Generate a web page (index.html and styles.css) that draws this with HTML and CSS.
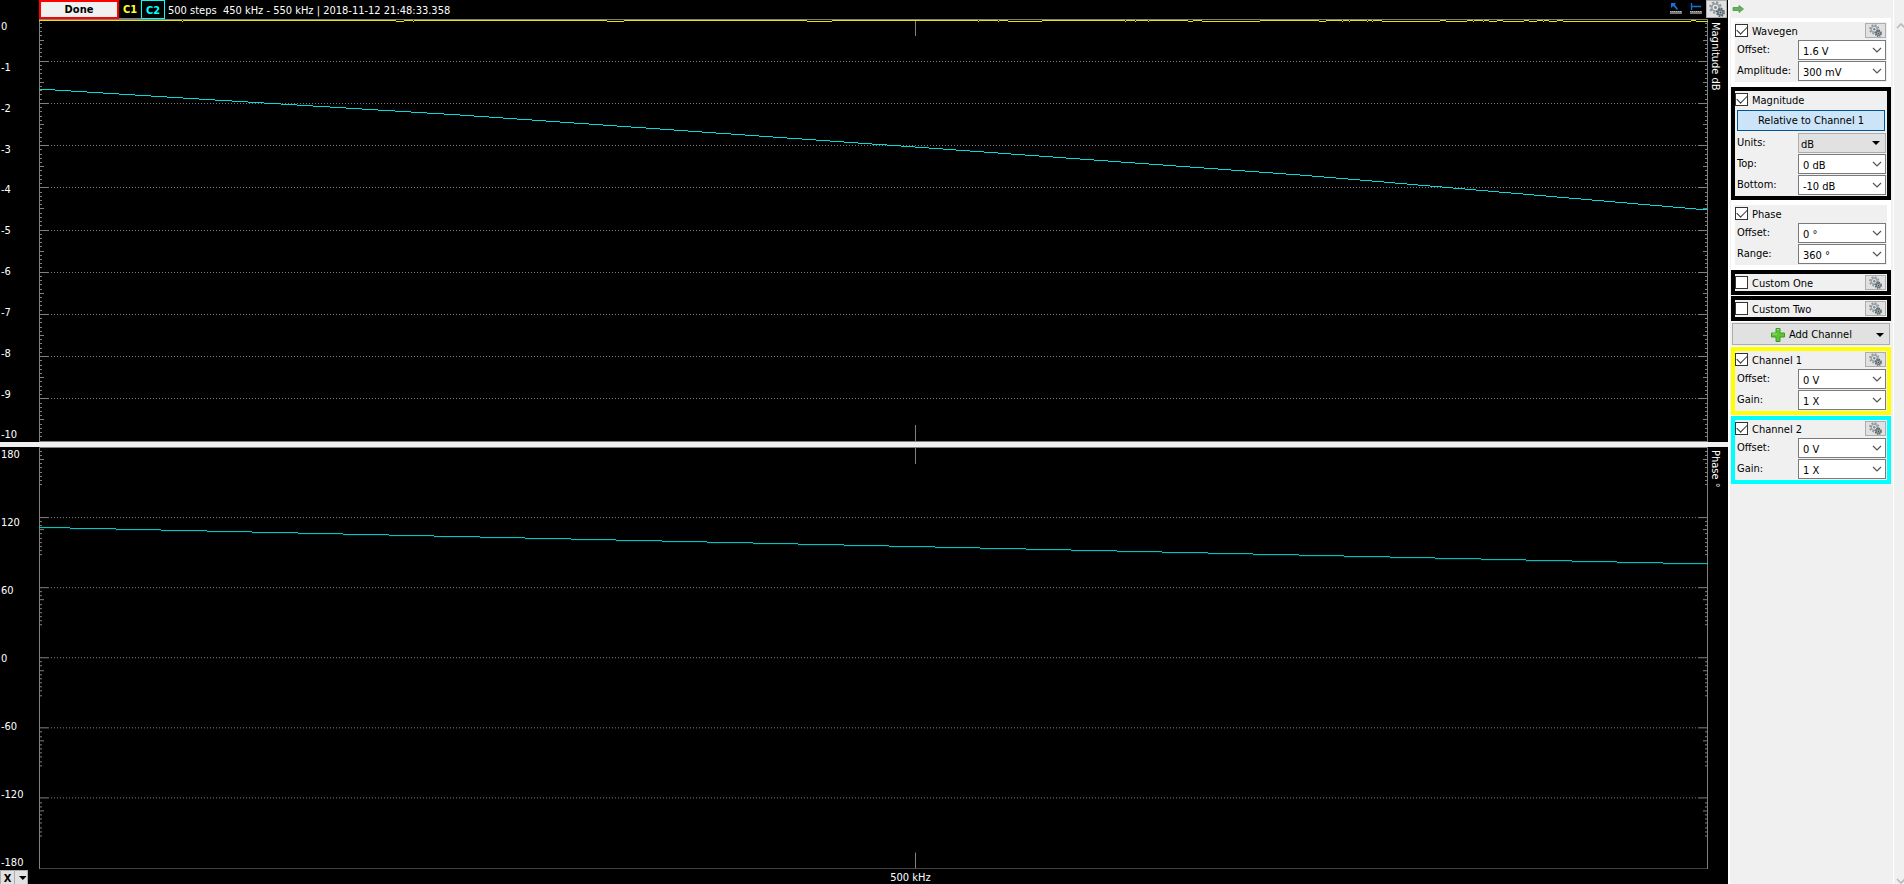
FILE: index.html
```html
<!DOCTYPE html>
<html lang="en">
<head>
<meta charset="utf-8">
<title>Network Analyzer</title>
<link rel="stylesheet" href="styles.css">
</head>
<body>
<svg class="defs" aria-hidden="true">
  <symbol id="gear" viewBox="0 0 16 16">
    <circle cx="6.500" cy="6.500" r="5.200" fill="none" stroke="#8b959b" stroke-width="2.200" stroke-dasharray="2.200 1.880"/>
    <circle cx="6.500" cy="6.500" r="3.700" fill="#e6eaec" stroke="#98a2a8" stroke-width="1.800"/>
    <circle cx="6.500" cy="6.500" r="1.500" fill="#7b868c"/>
    <circle cx="11.500" cy="11.500" r="3.500" fill="none" stroke="#59646b" stroke-width="2" stroke-dasharray="1.600 1.150"/>
    <circle cx="11.500" cy="11.500" r="2.500" fill="#c3cacd" stroke="#69747b" stroke-width="1.500"/>
    <circle cx="11.500" cy="11.500" r="1" fill="#3c464c"/>
  </symbol>
  <symbol id="chevron" viewBox="0 0 10 6"><path d="M1 1l4 4 4-4" fill="none" stroke="#555" stroke-width="1.2"/></symbol>
  <symbol id="triangle" viewBox="0 0 8 4"><path d="M0 0h8l-4 4z" fill="#000"/></symbol>
</svg>

<main class="scope">
  <header class="toolbar">
    <button class="done" type="button">Done</button>
    <button class="channel channel-one" type="button">C1</button>
    <button class="channel channel-two" type="button">C2</button>
    <p class="status">500 steps&nbsp; 450 kHz - 550 kHz | 2018-11-12 21:48:33.358</p>
    <div class="tools">
      <button class="tool" type="button" aria-label="Cursor">
        <svg width="12" height="12" viewBox="0 0 12 12"><path d="M1 0h5L4.800 1.500 8 6l-1 1L3.200 3 1 5z" fill="#1673d6"/><path d="M0 8h12v3H0z" fill="#777"/><path d="M0 8.500h12" stroke="#bbb" stroke-dasharray="1 1"/></svg>
      </button>
      <button class="tool" type="button" aria-label="Rulers">
        <svg width="12" height="12" viewBox="0 0 12 12"><path d="M1.500 0v7M1 3.500h10" fill="none" stroke="#1673d6" stroke-width="1.400"/><path d="M0 8h12v3H0z" fill="#777"/><path d="M0 8.500h12" stroke="#bbb" stroke-dasharray="1 1"/></svg>
      </button>
      <button class="gear gear-large" type="button" aria-label="Plot settings"><svg width="16" height="16"><use href="#gear"/></svg></button>
    </div>
  </header>

  <section class="chart">
    <div class="axis"><span>0</span><span>-1</span><span>-2</span><span>-3</span><span>-4</span><span>-5</span><span>-6</span><span>-7</span><span>-8</span><span>-9</span><span>-10</span></div>
    <div class="plot"><svg id="magnitude" viewBox="0 0 1669 423" preserveAspectRatio="none"></svg></div>
    <div class="title">Magnitude dB</div>
  </section>
  <div class="splitter"></div>
  <section class="chart">
    <div class="axis"><span>180</span><span>120</span><span>60</span><span>0</span><span>-60</span><span>-120</span><span>-180</span></div>
    <div class="plot"><svg id="phase" viewBox="0 0 1669 422" preserveAspectRatio="none"></svg></div>
    <div class="title">Phase °</div>
  </section>

  <footer class="footer">
    <button class="x-axis" type="button"><b>X</b><svg width="8" height="4"><use href="#triangle"/></svg></button>
    <div class="frequency">500 kHz</div>
  </footer>
</main>

<aside class="side">
  <div class="panel">
    <button class="next" type="button" aria-label="Collapse"><svg width="12" height="8" viewBox="0 0 12 8"><path d="M1 2.500h6V.5L11.500 4 7 7.500v-2H1z" fill="#62b35a" stroke="#4b9645" stroke-width=".8"/></svg></button>
    <div class="groups" id="groups"></div>
  </div>
  <div class="scroll">
    <svg width="8" height="6" viewBox="0 0 8 6"><path d="M1 5l4-4 4 4" fill="none" stroke="#b8b8b8" stroke-width="1.600"/></svg>
    <svg width="8" height="6" viewBox="0 0 8 6"><path d="M1 1l4 4 4-4" fill="none" stroke="#b8b8b8" stroke-width="1.600"/></svg>
  </div>
</aside>
<script src="app.js"></script>
</body>
</html>
```
FILE: styles.css
```css
* { box-sizing: border-box; }

body {
  margin: 0;
  height: 100vh;
  display: flex;
  overflow: hidden;
  background: #f0f0f0;
  color: #000;
  font: 11px/14px "DejaVu Sans Condensed", "DejaVu Sans", sans-serif;
}

button, select, input { font: inherit; color: inherit; margin: 0; padding: 0; border-radius: 0; }
svg { display: block; }
.defs { position: absolute; width: 0; height: 0; }

/* Plot area */
.scope {
  flex: 1;
  min-width: 0;
  display: grid;
  grid-template-rows: 19px minmax(0, 1fr) 5px minmax(0, 1fr) 15px;
  background: #000;
  color: #fff;
}

.toolbar { display: flex; align-items: flex-start; padding-left: 39px; }
.done { width: 80px; height: 19px; padding-top: 1px; border: 2px solid #f00; background: #f0f0f0; color: #000; font-weight: bold; }
.channel { height: 19px; padding-top: 2px; background: #000; font-weight: bold; }
.channel-one { width: 22px; border: 0; border-bottom: 1px solid #808080; color: #ff3; }
.channel-two { width: 24px; border: 1px solid #0ff; color: #0ff; }
.status { margin: 4px 0 0 3px; line-height: 13px; white-space: nowrap; }
.tools { display: flex; margin-left: auto; padding-right: 1px; }
.tool { width: 20px; height: 17px; border: 0; background: none; display: grid; place-items: center; }

.gear { width: 21px; height: 15px; border: 1px solid #adadad; background: #e1e1e1; display: grid; place-items: center; }
.gear-large { height: 18px; }

.chart { display: grid; grid-template-columns: 39px minmax(0, 1fr) 20px; min-height: 0; }
.axis { display: flex; flex-direction: column; justify-content: space-between; padding: 1px 0 0 1px; line-height: 13px; }
.plot { min-height: 0; }
.plot svg { width: 100%; height: 100%; shape-rendering: crispEdges; }
.plot path { fill: none; stroke-width: 1px; vector-effect: non-scaling-stroke; }
.frame { stroke: #808080; }
.grid { stroke: #808080; stroke-dasharray: 1 2; }
.trace-one { stroke: #e6e600; }
.trace-two { stroke: #00dcdc; }
.title { writing-mode: vertical-rl; padding-top: 3px; line-height: 14px; justify-self: start; }
.splitter { background: #f0f0f0; }

.footer { display: grid; grid-template-columns: 39px minmax(0, 1fr) 20px; }
.x-axis { width: 28px; height: 14px; margin-top: 1px; border: 1px solid #adadad; border-bottom: 0; background: #e1e1e1; color: #000; display: flex; align-items: center; gap: 4px; }
.x-axis b { width: 15px; padding-top: 2px; border-right: 1px solid #adadad; line-height: 12px; }
.frequency { padding: 3px 0 0 51%; line-height: 12px; }

/* Side panel */
.side { width: 176px; display: flex; border-left: 2px solid #fff; }
.panel { flex: 1; padding: 0 2px 0 1px; border-right: 1px solid #fff; }
.next { display: grid; place-items: center start; width: 20px; height: 18px; padding-left: 1px; border: 0; background: none; }
.groups { display: grid; gap: 1px; background: #fff; }
.group { margin: 0; border: 4px solid #fff; background: #f0f0f0; display: grid; gap: 1px; padding-bottom: 1px; }
.group-black { border-color: #000; }
.group-yellow { border-color: #ff0; }
.group-cyan { border-color: #0ff; }
.group-single { padding-bottom: 0; }

.group-head { display: flex; align-items: center; height: 17px; padding-right: 1px; }
.group-head label { flex: 1; display: flex; align-items: center; gap: 4px; line-height: 15px; }
.group-head label span { padding-top: 1px; }
.group-head input { appearance: none; width: 13px; height: 13px; border: 1px solid #333; background: #fff; display: grid; place-items: center; }
.group-head input:checked::before { content: ""; width: 9px; height: 5px; margin-top: -3px; border: solid #333; border-width: 0 0 1px 1px; transform: rotate(-45deg); }

.relative { height: 21px; margin: 1px 2px; padding-top: 1px; border: 1px solid #005499; background: #cce4f7; }
.field { display: grid; grid-template-columns: minmax(0, 1fr) 88px; align-items: center; padding: 0 1px 0 2px; }
.combo { display: grid; grid-template-columns: minmax(0, 1fr) 14px; align-items: center; }
.combo select { grid-area: 1 / 1 / 2 / 3; appearance: none; height: 20px; padding: 3px 0 0 4px; border: 1px solid #7a7a7a; background: #fff; }
.combo svg { grid-area: 1 / 2; pointer-events: none; z-index: 1; }
.combo-flat select { border-color: #adadad; background: #e1e1e1; padding-left: 2px; }

.add { display: flex; align-items: center; height: 22px; margin: 0 1px; padding: 1px 5px 0 38px; border: 1px solid #adadad; background: #e1e1e1; gap: 4px; }
.add-row { padding: 1px 0; background: #f0f0f0; }
.add-row .add { width: calc(100% - 2px); }
.add-label { flex: 1; padding-top: 1px; text-align: left; }

.scroll { width: 10px; padding: 23px 0 0 2px; display: flex; flex-direction: column; justify-content: space-between; overflow: hidden; }
```
FILE: app.js
```js
const SVG = "http://www.w3.org/2000/svg";
const WIDTH = 1669;

function addPath(svg, className, d) {
  const path = document.createElementNS(SVG, "path");
  path.setAttribute("class", className);
  path.setAttribute("d", d);
  svg.append(path);
}

function drawFrame(svg, height, divisions, minorTicks, middleTick) {
  const step = (height - 1) / divisions;
  const subStep = minorTicks.spacing;
  let ticks = `M.5 .5H${WIDTH - 0.5}V${height - 0.5}H.5Z`;
  let grid = "";
  const tick = (y, length) => {
    ticks += `M1 ${y}h${length}M${WIDTH - 1} ${y}h${-length}`;
  };
  for (let i = 0; i < divisions; i++) {
    const y = Math.floor(i * step) + 0.5;
    if (i > 0) {
      tick(y, 9);
      grid += `M12 ${y}H${WIDTH - 10}`;
    }
    for (let k = 1; k <= 9; k++) {
      const minor = Math.floor(i * step + k * subStep) + 0.5;
      tick(minor, k === middleTick ? 4 : 2);
    }
  }
  ticks += `M876.5 1v16M876.5 ${height - 1}v-16`;
  addPath(svg, "grid", grid);
  addPath(svg, "frame", ticks);
}

function drawTrace(svg, className, points) {
  let d = "";
  for (let i = 1; i < points.length; i++) {
    const [x0, y0] = points[i - 1];
    const [x1, y1] = points[i];
    const steps = y1 - y0;
    for (let k = 0; k < steps; k++) {
      const from = Math.round(x0 + (x1 - x0) * k / steps);
      const to = Math.round(x0 + (x1 - x0) * (k + 1) / steps);
      d += `M${from} ${y0 + k + 0.5}H${to}`;
    }
  }
  addPath(svg, className, d);
}

const magnitude = document.getElementById("magnitude");
drawFrame(magnitude, 423, 10, { spacing: 4.22 }, 5);

/* Spans in which channel 1 reads one step below 0 dB. */
const dips = [[143, 144], [357, 365], [374, 375], [568, 585], [768, 793], [939, 940], [959, 960],
  [969, 1003], [1086, 1087], [1096, 1097], [1109, 1110], [1149, 1154], [1163, 1221], [1280, 1287],
  [1303, 1304], [1310, 1311], [1328, 1329], [1333, 1334], [1343, 1401], [1407, 1428], [1434, 1435],
  [1444, 1445], [1450, 1458], [1464, 1485], [1490, 1498], [1504, 1505], [1510, 1518], [1524, 1652],
  [1657, 1669]];
let trace = "";
let x = 0;
for (const [from, to] of dips) {
  trace += `M${x} 1.5H${from}M${from} 2.5H${to}`;
  x = to;
}
addPath(magnitude, "trace-one", trace);
drawTrace(magnitude, "trace-two", [[0, 70], [160, 80], [421, 96], [564, 106], [876, 128], [1261, 156], [1333, 162], [1669, 191]]);

const phase = document.getElementById("phase");
drawFrame(phase, 422, 6, { spacing: 4.17 }, 3);
drawTrace(phase, "trace-two", [[-14, 80], [1669, 117]]);

const groups = [
  { name: "Wavegen", checked: true, gear: true, fields: [["Offset:", "1.6 V"], ["Amplitude:", "300 mV"]] },
  { name: "Magnitude", checked: true, color: "black", button: "Relative to Channel 1",
    fields: [["Units:", "dB", true], ["Top:", "0 dB"], ["Bottom:", "-10 dB"]] },
  { name: "Phase", checked: true, fields: [["Offset:", "0 °"], ["Range:", "360 °"]] },
  { name: "Custom One", color: "black", gear: true, fields: [] },
  { name: "Custom Two", color: "black", gear: true, fields: [] },
  { add: "Add Channel" },
  { name: "Channel 1", checked: true, color: "yellow", gear: true, fields: [["Offset:", "0 V"], ["Gain:", "1 X"]] },
  { name: "Channel 2", checked: true, color: "cyan", gear: true, fields: [["Offset:", "0 V"], ["Gain:", "1 X"]] }
];

const field = ([label, value, flat], id) => `
  <div class="field">
    <label for="${id}">${label}</label>
    <div class="combo ${flat ? "combo-flat" : ""}">
      <select id="${id}"><option>${value}</option></select>
      ${flat ? '<svg width="8" height="4"><use href="#triangle"/></svg>' : '<svg width="10" height="6"><use href="#chevron"/></svg>'}
    </div>
  </div>`;

document.getElementById("groups").innerHTML = groups.map((g, i) => g.add ? `
  <div class="add-row"><button class="add" type="button">
    <svg width="14" height="14" viewBox="0 0 14 14"><path d="M5 .5h4V5h4.500v4H9v4.500H5V9H.5V5H5z" fill="#5cc435" stroke="#3f9a24"/><path d="M6 1.500h2M1.500 6H6" stroke="#a5e588"/></svg>
    <span class="add-label">${g.add}</span>
    <svg width="8" height="4"><use href="#triangle"/></svg>
  </button></div>` : `
  <div class="group group-${g.color || "white"} ${g.fields.length ? "" : "group-single"}">
    <div class="group-head">
      <label><input type="checkbox" ${g.checked ? "checked" : ""}><span>${g.name}</span></label>
      ${g.gear ? `<button class="gear" type="button" aria-label="${g.name} settings"><svg width="13" height="13"><use href="#gear"/></svg></button>` : ""}
    </div>
    ${g.button ? `<button class="relative" type="button">${g.button}</button>` : ""}
    ${g.fields.map((f, k) => field(f, `field-${i}-${k}`)).join("")}
  </div>`).join("");
```
